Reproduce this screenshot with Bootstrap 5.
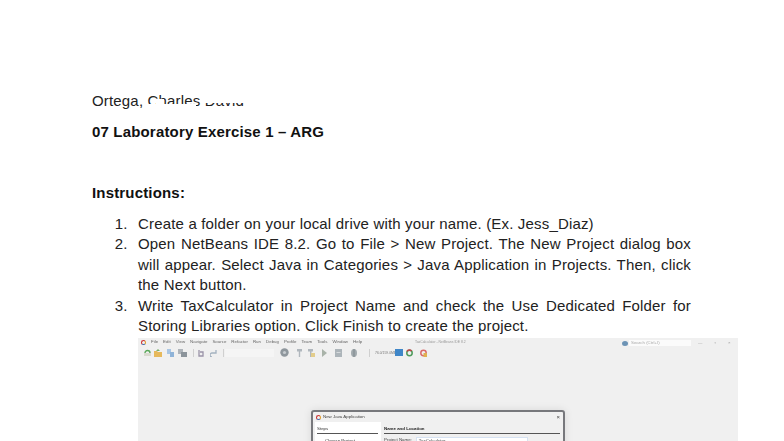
<!doctype html>
<html lang="en">
<head>
<meta charset="utf-8">
<title>07 Laboratory Exercise 1 – ARG</title>
<link href="https://cdn.jsdelivr.net/npm/bootstrap@5.3.0/dist/css/bootstrap.min.css" rel="stylesheet">
<style>
html,body{height:441px;overflow:hidden;background:#fff}
.docpage{font-family:"Liberation Sans",Arial,sans-serif;font-size:15px;letter-spacing:.17px;line-height:20.45px;color:#222;padding:91px 93px 0 92px;width:784px}
.authorline{position:relative;height:20px;width:170px}
.nameveil{position:absolute;background:#fff}
.veil-a{left:54px;top:13px;width:50px;height:5px}
.veil-b{left:108px;top:2px;width:50px;height:9.5px}
.veil-c{left:64px;top:8px;width:8px;height:5px}
.doctitle{font-weight:700;margin:10.5px 0 0;font-size:15px;line-height:20.4px;color:#111}
.dochead{font-weight:700;margin:41.5px 0 0;font-size:15px;line-height:20.4px;color:#111}
.steps{margin:10px 0 0;padding:0 0 0 46px}
.steps li{text-align:justify}
.steps li::marker{content:counter(list-item) ".\2002\200A\200A"}
.shot{margin:1.5px -47px 0 46px;height:110px;width:600px;background:#f0f0f0;position:relative;overflow:hidden;font-size:4.4px;letter-spacing:0;line-height:6px;color:#666}
.softer{filter:blur(.55px)}
.menurow{height:7px;padding:1px 0 0 3px;white-space:nowrap}
.logoapp{width:5px;height:5px;border:1px solid #c33;border-radius:50%;flex:none;border-right-color:#e0a030;border-bottom-color:#46a}
.menuitems{margin-left:5px;gap:5px}
.tooltitle{position:absolute;left:277px;top:1px;color:#999;font-size:3.4px}
.searchwrap{position:absolute;left:484px;top:2px;gap:2px;color:#aaa}
.searchdot{width:6px;height:5px;background:#6c93b5;border-radius:50%}
.searchbox{background:#fbfbfb;width:62px;height:6px;padding-left:2px;line-height:6px;margin-left:-1px}
.winctl{position:absolute;left:560px;top:2px;gap:12px;color:#999}
.toolrow{height:11px;padding:2px 0 0 5px;margin-top:1px}
.tbi{flex:none;display:block}
.tb-sep{width:1px;height:8px;background:#d0d0d0;flex:none}
.tb-input{width:49px;height:8px;background:#f5f5f5;flex:none}
.tb-memo{width:20px;color:#777;white-space:nowrap;overflow:hidden;font-size:3.4px;line-height:8px;flex:none}
.tb-memofill{width:8px;height:7px;background:#3f86c8;flex:none}
.ga1{margin-left:1px}.ga2{margin-left:2px}.ga3{margin-left:3px}.ga4{margin-left:4px}.ga5{margin-left:5px}.ga6{margin-left:6px}.ga7{margin-left:7px}.ga8{margin-left:8px}.ga9{margin-left:9px}.ga12{margin-left:12px}
.dialogbox{position:absolute;left:173px;top:72px;width:254px;height:60px;background:#f0f0f0;border:2px solid #77787c;border-radius:3px 3px 0 0;box-shadow:0 0 8px rgba(0,0,0,.1)}
.dlgtitle{height:10px;padding:0 3px;gap:2px;color:#444}
.dlgclose{margin-left:auto;font-size:6px;color:#444}
.dlgbody{height:40px}
.dlgsteps{width:66px;margin-left:2px;padding:4px 3px 0 2px;background:#fff;color:#333}
.dlgrule{height:1px;background:#555;margin-top:.5px}
.dlgmain{flex:1;padding:4px 3px 0 3px;color:#222;font-weight:700}
.dlgfield{margin-top:3px;font-weight:400;gap:4px;color:#444}
.dlginput{width:112px;background:#fff;border:1px solid #d6e2f2;height:7px;line-height:5px;padding-left:2px}
</style>
</head>
<body>
<main class="docpage">
  <div class="authorline">Ortega, Charles David
    <span class="nameveil veil-a"></span><span class="nameveil veil-b"></span><span class="nameveil veil-c"></span>
  </div>
  <h1 class="doctitle">07 Laboratory Exercise 1 – ARG</h1>
  <h2 class="dochead">Instructions:</h2>
  <ol class="steps">
    <li>Create a folder on your local drive with your name. (Ex. Jess_Diaz)</li>
    <li>Open NetBeans IDE 8.2. Go to File &gt; New Project. The New Project dialog box will appear. Select Java in Categories &gt; Java Application in Projects. Then, click the Next button.</li>
    <li>Write TaxCalculator in Project Name and check the Use Dedicated Folder for Storing Libraries option. Click Finish to create the project.</li>
  </ol>
  <div class="shot">
    <div class="softer">
      <div class="menurow d-flex align-items-center">
        <span class="logoapp"></span>
        <div class="menuitems d-flex"><span>File</span><span>Edit</span><span>View</span><span>Navigate</span><span>Source</span><span>Refactor</span><span>Run</span><span>Debug</span><span>Profile</span><span>Team</span><span>Tools</span><span>Window</span><span>Help</span></div>
      </div>
      <span class="tooltitle">TaxCalculator - NetBeans IDE 8.2</span>
      <div class="searchwrap d-flex align-items-center"><span class="searchdot"></span><span class="searchbox">Search (Ctrl+I)</span></div>
      <div class="winctl d-flex"><span>—</span><span>▫</span><span>×</span></div>
      <div class="toolrow d-flex align-items-center">
        <svg class="tbi" width="9" height="8" viewBox="0 0 9 8"><path d="M1 7h7V4H1z" fill="#d9d9cf"/><path d="M2 4a2.5 2.5 0 0 1 5 0" fill="none" stroke="#5aa85a" stroke-width="1.4"/></svg>
        <svg class="tbi ga2" width="8" height="8" viewBox="0 0 8 8"><path d="M0 2h3l1 1h4v5H0z" fill="#e6b95c"/><path d="M4 0l2 2H2z" fill="#7ab06a"/></svg>
        <svg class="tbi ga5" width="7" height="8" viewBox="0 0 7 8"><path d="M0 0h4v5H0z" fill="#a9c6e4"/><path d="M3 3h4v5H3z" fill="#8fb3d8"/></svg>
        <svg class="tbi ga4" width="9" height="8" viewBox="0 0 9 8"><path d="M0 0h5v5H0z" fill="#aeb4ba"/><path d="M3 3h6v5H3z" fill="#8c949b"/></svg>
        <span class="tb-sep ga6"></span>
        <svg class="tbi ga4" width="6" height="8" viewBox="0 0 6 8"><path d="M1 1v6h4V3H2" fill="none" stroke="#9a93a8" stroke-width="1.3"/></svg>
        <svg class="tbi ga6" width="7" height="8" viewBox="0 0 7 8"><path d="M6 1v3H2a2 2 0 0 0 0 4" fill="none" stroke="#a4b2c0" stroke-width="1.3"/></svg>
        <span class="tb-sep ga6"></span>
        <span class="tb-input ga1"></span>
        <svg class="tbi ga6" width="9" height="9" viewBox="0 0 9 9"><circle cx="4.5" cy="4.5" r="4.2" fill="#8f979d"/><circle cx="4.5" cy="4.5" r="1.6" fill="#c6cbcf"/></svg>
        <svg class="tbi ga8" width="5" height="8" viewBox="0 0 5 8"><path d="M0 0h5v2.5H3.2V8H1.8V2.5H0z" fill="#b0b7bd"/></svg>
        <svg class="tbi ga6" width="7" height="8" viewBox="0 0 7 8"><path d="M0 0h5v2.5H3.5V8H2V2.5H0z" fill="#b0b7bd"/><path d="M3 4h4v4H3z" fill="#e3cd8c"/></svg>
        <svg class="tbi ga7" width="5" height="8" viewBox="0 0 5 8"><path d="M0 0l5 4-5 4z" fill="#a9b3a9"/></svg>
        <svg class="tbi ga8" width="7" height="8" viewBox="0 0 7 8"><path d="M0 0h7v8H0z" fill="#adb5ba"/><path d="M1.5 3h4v1h-4z" fill="#d6dadd"/></svg>
        <svg class="tbi ga9" width="6" height="8" viewBox="0 0 6 8"><path d="M0 4a3 4 0 0 1 6 0 3 4 0 0 1-6 0" fill="#a2aaae"/><path d="M2.5 0h1v8h-1z" fill="#7f888e"/></svg>
        <span class="tb-sep ga12"></span>
        <span class="tb-memo ga5">76.0/159.0MB</span><span class="tb-memofill"></span>
        <svg class="tbi ga3" width="7" height="8" viewBox="0 0 7 8"><circle cx="3.5" cy="4" r="2.7" fill="none" stroke="#4d9a5a" stroke-width="1.5"/><path d="M1 2.5A2.8 2.8 0 0 1 5.5 2" fill="none" stroke="#c4444c" stroke-width="1.5"/></svg>
        <svg class="tbi ga7" width="7" height="8" viewBox="0 0 7 8"><circle cx="3.5" cy="4" r="2.7" fill="none" stroke="#d96a6a" stroke-width="1.5"/><path d="M3.5 4h3.5v4H3.5z" fill="#e0b050"/></svg>
      </div>
      <div class="dialogbox">
        <div class="dlgtitle d-flex align-items-center"><span class="logoapp"></span><span>New Java Application</span><span class="dlgclose">×</span></div>
        <div class="dlgbody d-flex">
          <div class="dlgsteps">Steps<div class="dlgrule"></div><div class="mt-1 ps-2">Choose Project</div></div>
          <div class="dlgmain">Name and Location<div class="dlgrule"></div><div class="dlgfield d-flex"><span>Project Name:</span><span class="dlginput">TaxCalculator</span></div></div>
        </div>
      </div>
    </div>
  </div>
</main>
<script src="https://cdn.jsdelivr.net/npm/bootstrap@5.3.0/dist/js/bootstrap.bundle.min.js"></script>
</body>
</html>
